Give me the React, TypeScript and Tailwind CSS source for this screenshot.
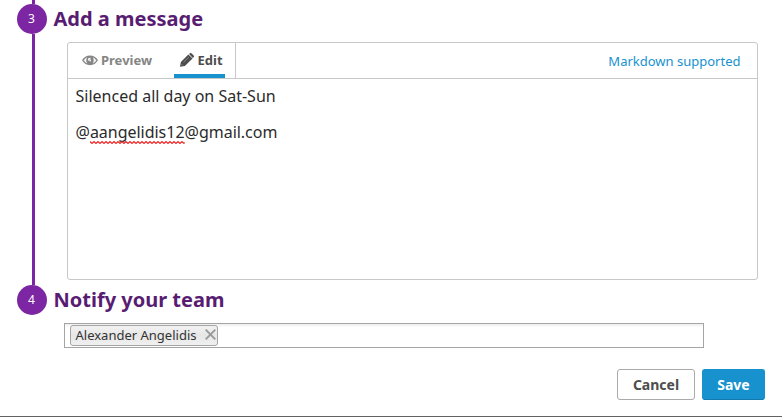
function Step({ n }: { n: number }) {
  return (
    <div className="flex h-[30px] w-[30px] shrink-0 items-center justify-center rounded-full bg-[#7d26a3] pr-px text-[12px] leading-none text-white">
      {n}
    </div>
  );
}

function EyeIcon() {
  return (
    <svg width="16" height="12" viewBox="0 0 16 12" fill="#858585">
      <path d="M0 5.300C1.800 2.200 4.600.500 8 .500S14.200 2.200 16 5.300C14.200 8.500 11.400 10.200 8 10.200S1.800 8.500 0 5.300Z" />
      <path d="M2 5.300C2.800 4 3.800 3.200 4.700 2.700 3.800 4.300 3.800 6.500 4.800 8.100 3.700 7.500 2.800 6.700 2 5.300ZM14 5.300C13.200 4 12.200 3.200 11.300 2.700 12.200 4.300 12.200 6.500 11.200 8.100 12.300 7.500 13.200 6.700 14 5.300Z" fill="#fff" stroke="#fff" strokeWidth=".4" />
      <path d="M6.400 5.600V4.700Q6.500 3.500 7.900 3.300V5.600H9" fill="none" stroke="#fff" strokeWidth="1.100" />
    </svg>
  );
}

function PencilIcon() {
  return (
    <svg width="14" height="14" viewBox="0 0 14 14" fill="#4d4d4d">
      <path d="M0 13.800.9 9 8.400 1.500 12.500 5.500 4.900 12.900Z" />
      <path d="m9.100.9.8-.7q.8-.5 1.500.1L13.700 2.400q.6.800 0 1.600l-.9.900Z" />
      <path d="m3.600 9.300 5.100-5.100M1.500 11.200l1.300 1.300" stroke="#fff" strokeOpacity=".55" strokeWidth=".6" />
    </svg>
  );
}

// Spell-checker mark below an unknown word
function Squiggle() {
  return (
    <svg className="absolute bottom-0 left-0 h-[3px] w-full" fill="none" stroke="#f02020">
      <defs>
        <pattern id="squiggle" width="4" height="3" patternUnits="userSpaceOnUse">
          <path d="M-1 1.500 0 .6 2 2.400 4 .6 5 1.500" strokeWidth="1.200" />
        </pattern>
      </defs>
      <rect width="100%" height="3" fill="url(#squiggle)" stroke="none" />
    </svg>
  );
}

export default function App() {
  return (
    <div className="flex h-[417px] w-[782px] flex-col overflow-hidden border-b border-[#626262] bg-white font-['Noto_Sans',sans-serif] text-[#2b2b2b]">
      <div className="flex pl-[17px]">
        <div className="flex w-[30px] shrink-0 flex-col items-center">
          <div className="ml-[3px] h-1 w-[3px] bg-[#7d26a3]" />
          <Step n={3} />
          <div className="ml-[3px] h-[251px] w-[3px] bg-[#7d26a3]" />
          <Step n={4} />
        </div>
        <div className="flex flex-col">
          <h2 className="ml-[6.500px] mt-[4px] h-[38px] text-[20px] leading-[30px] font-bold text-[#581d72]">Add a message</h2>
          <section className="ml-5 flex h-[238px] w-[691px] flex-col rounded-[3px] border border-[#c8c8c8]">
            <div className="flex h-[36px] shrink-0 justify-between border-b border-[#c8c8c8] text-[13px]">
              <div className="flex w-[168px] border-r border-[#c8c8c8] pl-[14px] font-bold">
                <div className="flex h-[35px] w-[92px] items-center text-[#858585]">
                  <EyeIcon />
                  <span className="ml-[3px]">Preview</span>
                </div>
                <div className="flex h-[35px] w-[51px] items-center border-b-4 border-[#1792cf] pl-[5.500px] pt-[4px] text-[#4d4d4d]">
                  <span className="-mt-[2px]">
                    <PencilIcon />
                  </span>
                  <span className="ml-1">Edit</span>
                </div>
              </div>
              <a className="pr-[16.500px] leading-[37px] text-[#1792cf]">Markdown supported</a>
            </div>
            <div className="pl-[7.500px] pt-[5px] text-[16px] leading-6">
              <p>Silenced all day on Sat-Sun</p>
              <p className="mt-3 tracking-[-0.020px]">
                @
                <span className="relative inline-block">
                  aangelidis12
                  <Squiggle />
                </span>
                @gmail.com
              </p>
            </div>
          </section>
          <h2 className="ml-[6.500px] mt-[5px] text-[20px] leading-[30px] font-bold text-[#581d72]">Notify your team</h2>
        </div>
      </div>
      <div className="ml-16 mt-2 flex h-[25px] w-[640px] shrink-0 border border-[#a5a5a5] bg-linear-to-b from-[#eeeeee] to-white to-15% pl-[5px] pt-px">
        <div className="flex h-[21px] w-[148px] items-center rounded-[3px] border border-[#a5a5a5] bg-linear-to-b from-[#f2f2f2] via-[#e7e7e7] to-[#f0f0f0] pl-[4.500px] text-[13px] text-[#333]">
          <span className="-mt-px leading-[18px]">Alexander Angelidis</span>
          <svg className="mb-[2px] ml-[8.500px]" width="11" height="11" viewBox="0 0 11 11" stroke="#999" strokeWidth="1.900">
            <path d="M.7.7 10.300 10.300M10.300.7.7 10.300" />
          </svg>
        </div>
      </div>
      <div className="mt-[21px] flex justify-end gap-[7px] pr-[17px] text-[14px] font-bold">
        <button className="h-[31px] w-[78px] rounded-[3px] border border-[#aaa] text-[#4d4d4d]">Cancel</button>
        <button className="h-[31px] w-[63px] rounded-[3px] border border-[#1792cf] border-b-[#117bb0] bg-[#1792cf] text-white">Save</button>
      </div>
    </div>
  );
}
